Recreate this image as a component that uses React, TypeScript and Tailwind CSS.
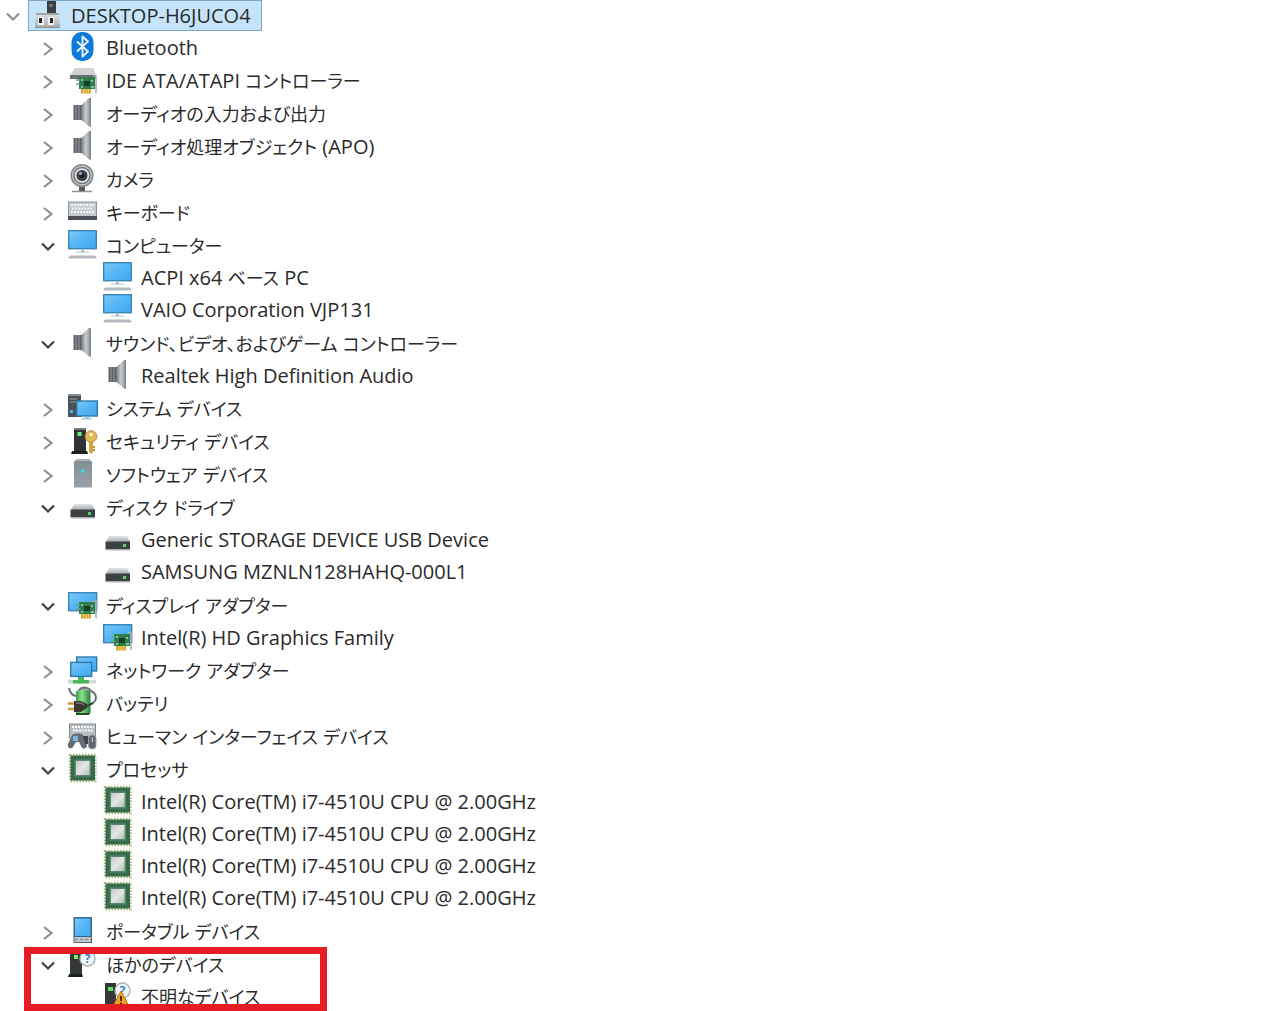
import { useState } from 'react';
import type { ReactNode } from 'react';
import clsx from 'clsx';

type IconName =
  | 'pc' | 'bluetooth' | 'ide' | 'speaker' | 'camera' | 'keyboard' | 'monitor' | 'system' | 'security'
  | 'software' | 'disk' | 'display' | 'network' | 'battery' | 'hid' | 'cpu' | 'portable' | 'other' | 'unknown';

type Device = { id: string; label: string; icon: IconName };
type Category = Device & { open?: boolean; marked?: boolean; children?: Device[] };

const CPU_LABEL = 'Intel(R) Core(TM) i7-4510U CPU @ 2.00GHz';

const CATEGORIES: Category[] = [
  { id: 'bluetooth', label: 'Bluetooth', icon: 'bluetooth' },
  { id: 'ide', label: 'IDE ATA/ATAPI コントローラー', icon: 'ide' },
  { id: 'audio-io', label: 'オーディオの入力および出力', icon: 'speaker' },
  { id: 'apo', label: 'オーディオ処理オブジェクト (APO)', icon: 'speaker' },
  { id: 'camera', label: 'カメラ', icon: 'camera' },
  { id: 'keyboard', label: 'キーボード', icon: 'keyboard' },
  {
    id: 'computer', label: 'コンピューター', icon: 'monitor', open: true,
    children: [
      { id: 'acpi', label: 'ACPI x64 ベース PC', icon: 'monitor' },
      { id: 'vaio', label: 'VAIO Corporation VJP131', icon: 'monitor' },
    ],
  },
  {
    id: 'sound', label: 'サウンド、ビデオ、およびゲーム コントローラー', icon: 'speaker', open: true,
    children: [{ id: 'realtek', label: 'Realtek High Definition Audio', icon: 'speaker' }],
  },
  { id: 'system', label: 'システム デバイス', icon: 'system' },
  { id: 'security', label: 'セキュリティ デバイス', icon: 'security' },
  { id: 'software', label: 'ソフトウェア デバイス', icon: 'software' },
  {
    id: 'disk', label: 'ディスク ドライブ', icon: 'disk', open: true,
    children: [
      { id: 'generic', label: 'Generic STORAGE DEVICE USB Device', icon: 'disk' },
      { id: 'samsung', label: 'SAMSUNG MZNLN128HAHQ-000L1', icon: 'disk' },
    ],
  },
  {
    id: 'display', label: 'ディスプレイ アダプター', icon: 'display', open: true,
    children: [{ id: 'hd', label: 'Intel(R) HD Graphics Family', icon: 'display' }],
  },
  { id: 'network', label: 'ネットワーク アダプター', icon: 'network' },
  { id: 'battery', label: 'バッテリ', icon: 'battery' },
  { id: 'hid', label: 'ヒューマン インターフェイス デバイス', icon: 'hid' },
  {
    id: 'cpu', label: 'プロセッサ', icon: 'cpu', open: true,
    children: [
      { id: 'cpu0', label: CPU_LABEL, icon: 'cpu' },
      { id: 'cpu1', label: CPU_LABEL, icon: 'cpu' },
      { id: 'cpu2', label: CPU_LABEL, icon: 'cpu' },
      { id: 'cpu3', label: CPU_LABEL, icon: 'cpu' },
    ],
  },
  { id: 'portable', label: 'ポータブル デバイス', icon: 'portable' },
  {
    id: 'other', label: 'ほかのデバイス', icon: 'other', open: true, marked: true,
    children: [{ id: 'unknown', label: '不明なデバイス', icon: 'unknown' }],
  },
];

// gradients shared by all icons
const IconDefs = () => (
  <svg className="absolute size-0" aria-hidden="true">
    <defs>
      <linearGradient id="screen" x1="0" y1="0" x2="1" y2="1">
        <stop offset="0" stopColor="#7cc8f8" />
        <stop offset="0.5" stopColor="#55b5f4" />
        <stop offset="1" stopColor="#3fa8ee" />
      </linearGradient>
      <linearGradient id="metal" x1="0" y1="0" x2="1" y2="0">
        <stop offset="0" stopColor="#7d8084" />
        <stop offset="0.45" stopColor="#c9ccce" />
        <stop offset="1" stopColor="#8b8e92" />
      </linearGradient>
      <linearGradient id="silver" x1="0" y1="0" x2="0" y2="1">
        <stop offset="0" stopColor="#e4e5e6" />
        <stop offset="1" stopColor="#a5a8ab" />
      </linearGradient>
      <linearGradient id="slate" x1="0" y1="0" x2="0" y2="1">
        <stop offset="0" stopColor="#84909a" />
        <stop offset="1" stopColor="#9aa1a8" />
      </linearGradient>
      <linearGradient id="green" x1="0" y1="0" x2="1" y2="0">
        <stop offset="0" stopColor="#3f9a4c" />
        <stop offset="0.4" stopColor="#8be28b" />
        <stop offset="1" stopColor="#2b7d3a" />
      </linearGradient>
      <linearGradient id="die" x1="0" y1="0" x2="1" y2="1">
        <stop offset="0" stopColor="#c2cbca" />
        <stop offset="0.5" stopColor="#e2e6e6" />
        <stop offset="1" stopColor="#b3bebc" />
      </linearGradient>
    </defs>
  </svg>
);

const board = (
  <>
    <rect x="13" y="12" width="16" height="12" fill="#2e7f4d" />
    <path d="M10 15h4M10 19h4" stroke="#6f9f7d" strokeWidth="1.5" />
    <rect x="18" y="16" width="6" height="5" fill="#173f29" />
    <path d="M15 15h2M26 15v2M15 22h2M25 22h3" stroke="#9fd8a8" strokeWidth="1.5" />
    <path d="M15 24h10v4.500H15z" fill="#d9a536" />
    <path d="M17.500 24v4M20 24v4M22.500 24v4" stroke="#f3d37b" strokeWidth="0.8" />
    <path d="M27 11h3v17" fill="none" stroke="#a9aeb1" strokeWidth="1.6" />
  </>
);

const bubble = (
  <>
    <circle cx="21.500" cy="9.500" r="7.500" fill="#f4f7fa" stroke="#a9b2bb" strokeWidth="1.4" />
    <text x="21.500" y="14" textAnchor="middle" fontSize="12" fontWeight="700" fill="#3b7fc4">?</text>
  </>
);

const ICONS: Record<IconName, ReactNode> = {
  pc: (
    <>
      <rect x="16" y="1" width="9" height="13" fill="#3b3f43" />
      <rect x="18" y="4" width="4" height="3" fill="#6d7378" />
      <path d="M5 13h23l1 15H4z" fill="url(#silver)" />
      <path d="M5 13h23v2H5z" fill="#a2a6a9" />
      <rect x="7" y="17" width="6" height="8" fill="#f5f6f7" />
      <rect x="17" y="17" width="6" height="8" fill="#f5f6f7" />
      <rect x="8" y="18" width="3" height="5" fill="#24272a" />
      <rect x="19" y="18" width="3" height="5" fill="#24272a" />
      <path d="M4 27.500h25" stroke="#8d9296" strokeWidth="1.2" />
    </>
  ),
  bluetooth: (
    <>
      <rect x="5.500" y="0" width="22" height="29" rx="10" fill="#0f7ad8" />
      <path d="M11 9.500l11 10-5.500 5V4.500l5.500 5-11 10" fill="none" stroke="#e4f3ff" strokeWidth="1.900" strokeLinejoin="round" />
    </>
  ),
  ide: (
    <>
      <path d="M9 3h18l3 7H4z" fill="#cfd1d3" />
      <path d="M4 10h26v4H4z" fill="#6b6f73" />
      {board}
    </>
  ),
  speaker: (
    <>
      <rect x="7.500" y="7" width="9" height="15" fill="#60656b" />
      <path d="M10 7v15M13 7v15" stroke="#93989e" strokeWidth="1" />
      <path d="M15.500 7L23 0h2v28.500h-2l-7.500-6.500z" fill="url(#metal)" />
      <path d="M24.300 0v28.500" stroke="#84888c" strokeWidth="1.400" />
    </>
  ),
  camera: (
    <>
      <path d="M6 27.500h20" stroke="#8f9498" strokeWidth="1.500" />
      <rect x="13" y="21" width="6" height="6" fill="#595d61" />
      <circle cx="16" cy="11.500" r="10.800" fill="#c5c7c9" stroke="#85898d" strokeWidth="1.500" />
      <circle cx="16" cy="11.500" r="8" fill="#e2e3e4" stroke="#77797c" strokeWidth="1.500" />
      <circle cx="16" cy="11.500" r="5.500" fill="#3c4249" />
      <circle cx="16" cy="11.500" r="2.500" fill="#171b20" />
      <circle cx="14.500" cy="9.500" r="1.600" fill="#9fb6c8" />
    </>
  ),
  keyboard: (
    <>
      <rect x="2.500" y="5" width="28" height="15" fill="#c5cad0" stroke="#8e949b" />
      <path d="M5 8h23M6 11.500h21M5 15h23" stroke="#f1f3f5" strokeWidth="2" strokeDasharray="2 1" />
      <rect x="2" y="19" width="29" height="4" fill="#4b5056" />
    </>
  ),
  monitor: (
    <>
      <rect x="2.700" y="0.700" width="27.600" height="18" fill="url(#screen)" stroke="#3c86b7" strokeWidth="1.400" />
      <path d="M15 20h3v1.500h-3zM10 21.500h13v1H10z" fill="#a9c3d6" />
      <path d="M4 25.500h25l2 3H2z" fill="#b4babf" />
    </>
  ),
  system: (
    <>
      <rect x="2" y="1" width="13" height="23" fill="#4b5157" />
      <path d="M2 1h13v2H2z" fill="#868c91" />
      <path d="M4 6h7M4 9h7" stroke="#98a2aa" strokeWidth="1.200" />
      <rect x="4" y="17" width="3" height="3" fill="#3fb8e8" />
      <rect x="10.700" y="8" width="20.600" height="15" fill="url(#screen)" stroke="#2f77a8" strokeWidth="1.400" />
      <path d="M19 23.700h4v2h-4zM16 25h10v1.500H16z" fill="#9dc8df" />
    </>
  ),
  security: (
    <>
      <rect x="8" y="2" width="12" height="23" fill="#2f3335" />
      <path d="M8 2h12v2H8z" fill="#777b7e" />
      <path d="M6 25h15l1 3H5z" fill="#1e2122" />
      <rect x="11.500" y="6" width="4" height="4" fill="#6af07d" />
      <path d="M23 14h4v12l-2 2-2-2z" fill="#d6a23e" />
      <path d="M27 20h2v2h-2zM27 23h2v2h-2z" fill="#c08d2c" />
      <circle cx="25" cy="10.500" r="5.800" fill="#e2b65a" stroke="#b98a35" />
      <circle cx="25" cy="8.500" r="1.700" fill="#fdf6e4" />
    </>
  ),
  software: (
    <>
      <path d="M10 0h14l2 4H8z" fill="#aab2b8" />
      <path d="M8 3h18v25.500H8z" fill="url(#slate)" />
      <path d="M8 3h18" stroke="#727a81" />
      <path d="M16.500 9.500l2.500 2.500-2.500 2.500L14 12z" fill="#42cfd8" />
    </>
  ),
  disk: (
    <>
      <path d="M8 12h18l3 6H5z" fill="url(#silver)" />
      <rect x="4.500" y="17.500" width="24.500" height="8" fill="#3d4144" />
      <path d="M5 26h24" stroke="#b6b9bb" />
      <rect x="22" y="20" width="3" height="3" fill="#55d368" />
    </>
  ),
  display: (
    <>
      <rect x="2.700" y="2.700" width="28" height="18" fill="url(#screen)" stroke="#3c86b7" strokeWidth="1.400" />
      {board}
    </>
  ),
  network: (
    <>
      <rect x="10.700" y="2" width="20" height="14" fill="url(#screen)" stroke="#3279a9" strokeWidth="1.400" />
      <path d="M2 25h28v3.500H2z" fill="#d3d8d6" />
      <path d="M12 22h6v3h5v3.500H7V25h5z" fill="#43b95a" />
      <rect x="4.700" y="7.400" width="21" height="14" fill="url(#screen)" stroke="#3279a9" strokeWidth="1.400" />
    </>
  ),
  battery: (
    <>
      <path d="M14 0h7v3h-7z" fill="#a4a9a6" />
      <rect x="10" y="2" width="14.500" height="25" rx="3" fill="url(#green)" />
      <path d="M3 0c1 5 4 8 8 8M13 2c3-4 9-3 12 1 5 2 7 8 2 12-3 2-5 2-8 2" fill="none" stroke="#6d7375" strokeWidth="2" />
      <path d="M2 15.500h7M2 21h7" stroke="#c59a3b" strokeWidth="2.400" />
      <path d="M8 13h7l6 3v4l-6 4H8z" fill="#3a3734" />
      <path d="M10 15h5l3 2" stroke="#807a73" strokeWidth="1.500" fill="none" />
      <path d="M20 18c3 0 4-2 7-3M10 26h13" fill="none" stroke="#254a2b" strokeWidth="2" />
    </>
  ),
  hid: (
    <>
      <rect x="3.500" y="3" width="26" height="14" fill="#b6bcc2" stroke="#858b91" />
      <path d="M6 6h22M7 9.500h20" stroke="#f7f8f9" strokeWidth="2" strokeDasharray="2 1" />
      <path d="M6 14c3-2 9-2 11 0l4 10c0 4-4 5-6 1l-2-4h-3l-3 5c-2 3-6 1-5-3z" fill="#676d74" />
      <path d="M7 15h5v5H7z" fill="#79b4e2" />
      <path d="M17 15h5l1 8h-4z" fill="#3f444a" />
      <rect x="22.500" y="14" width="7.500" height="14" rx="3.500" fill="#5f656b" stroke="#999fa5" />
      <path d="M26.300 16v5" stroke="#dadde0" />
    </>
  ),
  cpu: (
    <>
      <rect x="4" y="1" width="25.500" height="26" fill="none" stroke="#b2b878" strokeWidth="2.400" strokeDasharray="1.500 1.500" />
      <rect x="4.500" y="1.500" width="24.500" height="25" fill="#366b4b" />
      <rect x="8.500" y="5.500" width="16.500" height="17" fill="#5b8b6d" />
      <rect x="10" y="7" width="13.500" height="14" fill="url(#die)" />
    </>
  ),
  portable: (
    <>
      <rect x="8" y="1.500" width="17.500" height="25" fill="#c0c7cc" stroke="#5e6b75" />
      <rect x="8.500" y="2" width="16.500" height="18.500" fill="url(#screen)" stroke="#27679a" />
      <path d="M9 23.500h16" stroke="#7d868d" strokeDasharray="3 2" />
    </>
  ),
  other: (
    <>
      <rect x="4" y="1" width="12" height="24" fill="#34383a" />
      <path d="M3 25h13l1 3H2z" fill="#1e2122" />
      <rect x="8" y="6" width="4" height="4" fill="#7bea5f" />
      {bubble}
    </>
  ),
  unknown: (
    <>
      <rect x="4" y="2" width="11" height="26" fill="#34383a" />
      <rect x="7" y="6" width="5" height="4" fill="#5fe06a" />
      {bubble}
      <path d="M20 10l8 15H12z" fill="#f1a024" stroke="#b8741a" />
      <path d="M20 15v5M20 21.500v2" stroke="#3a2407" strokeWidth="1.800" />
    </>
  ),
};

const Chevron = ({ open, muted }: { open: boolean; muted?: boolean }) => (
  <svg
    viewBox="0 0 16 16"
    className={clsx('size-4', open && !muted ? 'text-[#404040]' : 'text-[#8f8f8f]')}
    fill="none"
    stroke="currentColor"
    strokeWidth="2.200"
  >
    <path d={open ? 'M2 5.500l6 6 6-6' : 'M4 3l7.500 6L4 15'} />
  </svg>
);

// kana and kanji run a little smaller than the latin text beside them
const JAPANESE = /([\u3001-\u9fff]+)/;

const Label = ({ text }: { text: string }) => (
  <span>
    {text.split(JAPANESE).map((part, i) =>
      JAPANESE.test(part) ? <span key={i} className="text-[18px]">{part}</span> : part,
    )}
  </span>
);

type RowProps = {
  item: Device;
  selected: boolean;
  onSelect: (id: string) => void;
  open?: boolean;
  muted?: boolean;
  onToggle?: () => void;
};

const Row = ({ item, selected, onSelect, open = false, muted, onToggle }: RowProps) => (
  <div className="flex h-full items-center gap-0.5">
    {onToggle ? (
      <button
        type="button"
        aria-label={item.label}
        aria-expanded={open}
        onClick={onToggle}
        className="flex h-full w-[26px] shrink-0 items-center justify-center"
      >
        <Chevron open={open} muted={muted} />
      </button>
    ) : (
      <span className="w-[26px] shrink-0" />
    )}
    <button
      type="button"
      onClick={() => onSelect(item.id)}
      className={clsx(
        'flex h-full items-center gap-2 whitespace-nowrap border pl-0.5 pr-2.5',
        selected ? 'border-[#7da7c4] bg-[#c5e4fa]' : 'border-transparent',
      )}
    >
      <svg viewBox="0 0 32 32" className="size-8 shrink-0 overflow-visible" aria-hidden="true">
        {ICONS[item.icon]}
      </svg>
      <Label text={item.label} />
    </button>
  </div>
);

export default function App() {
  const [rootOpen, setRootOpen] = useState(true);
  const [selected, setSelected] = useState('root');
  const [openIds, setOpenIds] = useState(() => CATEGORIES.filter((c) => c.open).map((c) => c.id));

  const toggle = (id: string) =>
    setOpenIds((ids) => (ids.includes(id) ? ids.filter((i) => i !== id) : [...ids, id]));

  return (
    <main
      lang="ja"
      className="h-screen overflow-hidden bg-white font-['Open_Sans','Noto_Sans_CJK_JP',sans-serif] text-[20px] leading-8 text-[#2b2b2b] [font-feature-settings:'palt']"
    >
      <IconDefs />
      <div className="h-[31px]">
        <Row
          item={{ id: 'root', label: 'DESKTOP-H6JUCO4', icon: 'pc' }}
          selected={selected === 'root'}
          onSelect={setSelected}
          open={rootOpen}
          muted
          onToggle={() => setRootOpen(!rootOpen)}
        />
      </div>
      {rootOpen && (
        <ul>
          {CATEGORIES.map((c) => {
            const open = openIds.includes(c.id);

            return (
              <li key={c.id} className="relative">
                <div className="h-[33px] pl-[35px]">
                  <Row
                    item={c}
                    selected={selected === c.id}
                    onSelect={setSelected}
                    open={open}
                    onToggle={() => toggle(c.id)}
                  />
                </div>
                {open && c.children && (
                  <ul className={clsx(c.children.length > 1 && 'pb-px')}>
                    {c.children.map((d) => (
                      <li key={d.id} className="h-8 pl-[70px]">
                        <Row item={d} selected={selected === d.id} onSelect={setSelected} />
                      </li>
                    ))}
                  </ul>
                )}
                {c.marked && (
                  <div className="pointer-events-none absolute -top-px bottom-0.5 left-6 w-[303px] border-[7px] border-[#e51c23]" />
                )}
              </li>
            );
          })}
        </ul>
      )}
    </main>
  );
}
